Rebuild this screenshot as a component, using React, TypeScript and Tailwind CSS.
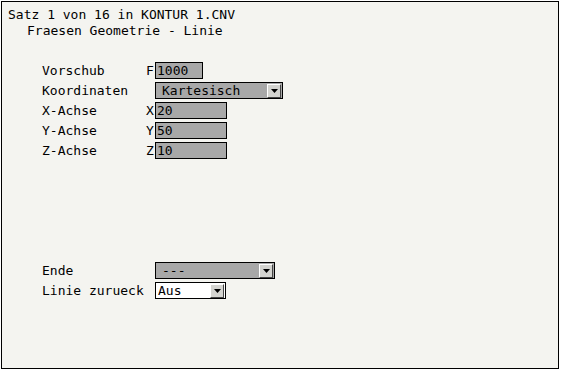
import type { ReactNode } from 'react'

const mono = { fontFamily: '"DejaVu Sans Mono", "Liberation Mono", monospace' }

function ArrowButton() {
  return (
    <div className="flex h-[14px] w-[14px] items-center justify-center border border-t-white border-l-white border-r-[#444] border-b-[#444] bg-[#d4d4d0]">
      <svg width="7" height="4" viewBox="0 0 7 4">
        <polygon points="0,0 7,0 3.5,4" fill="#000" />
      </svg>
    </div>
  )
}

function Field({ value, width }: { value: string; width: string }) {
  return (
    <div className={`flex h-[17px] items-center border border-black bg-[#a8a8a8] pl-[1px] ${width}`}>
      {value}
    </div>
  )
}

function Select({ value, width, white }: { value: string; width: string; white?: boolean }) {
  return (
    <div
      className={`flex h-[17px] items-center justify-between border border-black pr-[1px] ${width} ${
        white ? 'bg-white pl-[2px]' : 'bg-[#a8a8a8] pl-[6px]'
      }`}
    >
      <span>{value}</span>
      <ArrowButton />
    </div>
  )
}

function Row({ label, prefix, children }: { label: string; prefix?: string; children: ReactNode }) {
  return (
    <div className="flex h-[20px] items-start">
      <div className="flex h-[17px] w-[104px] items-center">{label}</div>
      <div className="flex h-[17px] w-[9px] items-center">{prefix}</div>
      {children}
    </div>
  )
}

export default function App() {
  return (
    <div className="h-[371px] w-[561px] bg-white pl-[1px] pt-[1px] text-[13px] text-black" style={mono}>
      <div className="flex h-[368px] w-[558px] flex-col border border-black bg-[#f4f4f0]">
        <div className="pl-[6px] pt-[5px] leading-[16px]">Satz 1 von 16 in KONTUR 1.CNV</div>
        <div className="pl-[25px] leading-[16px]">Fraesen Geometrie - Linie</div>

        <div className="mt-[23px] pl-[40px]">
          <Row label="Vorschub" prefix="F">
            <Field value="1000" width="w-[48px]" />
          </Row>
          <Row label="Koordinaten">
            <Select value="Kartesisch" width="w-[128px]" />
          </Row>
          <Row label="X-Achse" prefix="X">
            <Field value="20" width="w-[72px]" />
          </Row>
          <Row label="Y-Achse" prefix="Y">
            <Field value="50" width="w-[72px]" />
          </Row>
          <Row label="Z-Achse" prefix="Z">
            <Field value="10" width="w-[72px]" />
          </Row>
        </div>

        <div className="mt-[100px] pl-[40px]">
          <Row label="Ende">
            <Select value="---" width="w-[120px]" />
          </Row>
          <Row label="Linie zurueck">
            <Select value="Aus" width="w-[71px]" white />
          </Row>
        </div>
      </div>
    </div>
  )
}
